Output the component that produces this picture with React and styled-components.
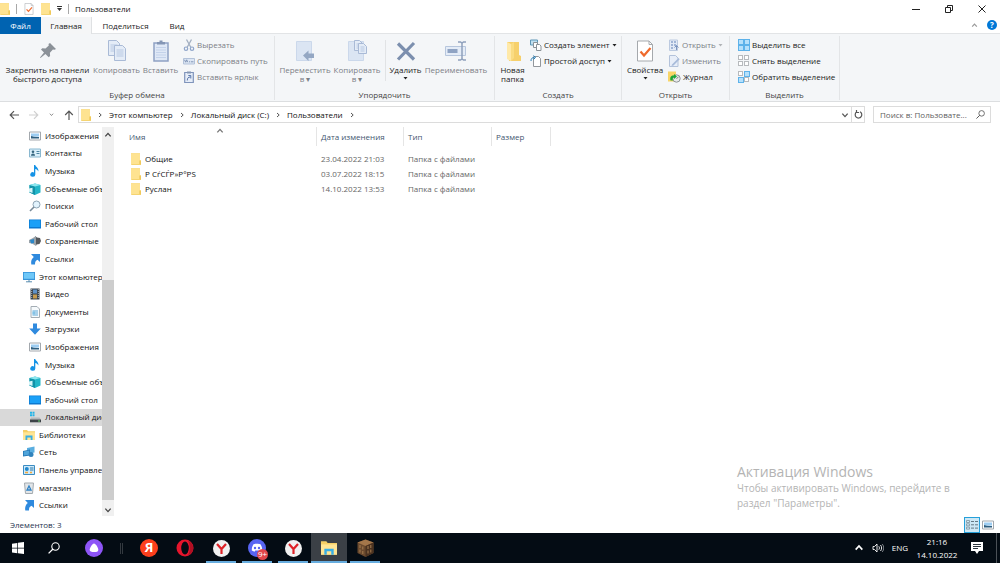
import React from 'react';
import styled, { createGlobalStyle } from 'styled-components';

const GlobalStyle = createGlobalStyle`
  * {
    box-sizing: border-box;
  }

  body {
    margin: 0;
    background: #fff;
    color: #111;
    font-family: 'Open Sans', 'Noto Sans', sans-serif;
    font-size: 8px;
    line-height: 10px;
  }

  button, input {
    font: inherit;
    color: inherit;
    margin: 0;
    padding: 0;
    border: none;
    background: none;
  }

  a {
    color: inherit;
    text-decoration: none;
  }

  svg {
    display: block;
    flex: none;
  }
`;

const Window = styled.div`
  position: relative;
  display: flex;
  flex-direction: column;
  min-height: 100vh;
`;

const TitleBar = styled.header`
  display: flex;
  align-items: center;
  height: 17px;
  gap: 6px;
`;

const QuickButton = styled.button`
  display: flex;
`;

const Divider = styled.span`
  width: 1px;
  height: 10px;
  background: #a8a8a8;
`;

const WindowTitle = styled.h1`
  flex: 1;
  margin: 0;
  font-size: 8px;
  font-weight: 400;
  line-height: 12px;
`;

const WindowButtons = styled.div`
  display: flex;
  padding-right: 2px;
`;

const WindowButton = styled.button`
  display: flex;
  align-items: center;
  justify-content: center;
  width: 33px;
  height: 15px;
`;

const TabBar = styled.nav`
  display: flex;
  height: 17px;
  border-bottom: 1px solid #e2e4e6;
`;

const Tab = styled.button`
  width: ${(props) => props.$width}px;
  height: 17px;
  color: ${(props) => (props.$file ? '#fff' : '#222')};
  background: ${(props) => (props.$file ? '#0063b1' : props.$active ? '#f5f6f7' : 'none')};
  border-right: ${(props) => (props.$active ? '1px solid #dfe1e3' : 'none')};
`;

const TabTools = styled.div`
  display: flex;
  align-items: center;
  gap: 9px;
  margin-left: auto;
  padding-right: 3px;
`;

const HelpButton = styled.button`
  width: 10px;
  height: 10px;
  border-radius: 50%;
  background: #0078d7;
  color: #fff;
  font-weight: 700;
`;

const Ribbon = styled.div`
  display: flex;
  height: 68px;
  padding: 2px 0 1px;
  background: #f4f6f8;
  border-bottom: 1px solid #dcdee0;
`;

const Group = styled.section`
  display: flex;
  flex-direction: column;
  justify-content: space-between;
  width: ${(props) => props.$width}px;
  border-right: 1px solid #e3e5e7;
`;

const GroupTools = styled.div`
  display: flex;
  padding: 1px 0 0 4px;
`;

const GroupLabel = styled.div`
  text-align: center;
  color: #444;
`;

const BigButton = styled.button`
  display: flex;
  flex-direction: column;
  align-items: center;
  gap: 3px;
  width: ${(props) => props.$width}px;
  height: 51px;
  padding-top: 3px;
  white-space: nowrap;
  line-height: 9px;
  color: #222;

  &:disabled {
    color: #7c8086;
  }
`;

const SmallButtons = styled.div`
  display: flex;
  flex-direction: column;
  align-items: flex-start;
  padding-left: 4px;
`;

const SmallButton = styled.button`
  display: flex;
  align-items: center;
  gap: 2px;
  height: 16px;
  color: #222;
  white-space: nowrap;

  &:disabled {
    color: #7c8086;
  }
`;

const ToolDivider = styled.span`
  width: 1px;
  height: 41px;
  margin: 3px 3px 0 2px;
  background: #e1e3e5;
`;

const AddressRow = styled.div`
  display: flex;
  align-items: center;
  height: 25px;
  padding: 0 9px;
  gap: 8px;
`;

const NavButtons = styled.div`
  display: flex;
  align-items: center;
  gap: 10px;
  width: 61px;
`;

const AddressBox = styled.div`
  display: flex;
  align-items: center;
  flex: 1;
  height: 17px;
  border: 1px solid #dcdcdc;
`;

const Crumbs = styled.div`
  display: flex;
  align-items: center;
  flex: 1;
  gap: 6px;
  padding-left: 2px;
`;

const BoxButton = styled.button`
  display: flex;
  align-items: center;
  justify-content: center;
  width: 13px;
  height: 15px;
  border-left: ${(props) => (props.$line ? '1px solid #dcdcdc' : 'none')};
`;

const SearchBox = styled.label`
  display: flex;
  align-items: center;
  width: 118px;
  height: 17px;
  padding: 0 5px 0 6px;
  border: 1px solid #dcdcdc;

  input {
    flex: 1;
    min-width: 0;
    outline: none;
  }

  input::placeholder {
    color: #606060;
    opacity: 1;
  }
`;

const Body = styled.div`
  display: flex;
  flex: 1;
`;

const Sidebar = styled.nav`
  display: flex;
  flex-direction: column;
  width: 102px;
  padding-bottom: 3px;
  overflow: hidden;
`;

const TreeItem = styled.a`
  display: flex;
  align-items: center;
  flex: 1;
  gap: 4px;
  padding-left: ${(props) => (props.$root ? 23 : 29)}px;
  background: ${(props) => (props.$selected ? '#d9d9d9' : 'none')};
  white-space: nowrap;
`;

const ScrollBar = styled.div`
  display: flex;
  flex-direction: column;
  align-items: center;
  justify-content: space-between;
  width: 12px;
  margin-bottom: 1px;
  padding: 4px 0 2px;
  background: #f0f0f0;
`;

const ScrollTrack = styled.div`
  display: flex;
  flex-direction: column;
  justify-content: flex-end;
  flex: 1;
  width: 12px;
  padding-bottom: 6px;
`;

const ScrollThumb = styled.div`
  height: 61%;
  background: #cdcdcd;
`;

const Content = styled.main`
  flex: 1;
  padding-left: 10px;
`;

const FileTable = styled.table`
  table-layout: fixed;
  width: 427px;
  border-collapse: separate;
  border-spacing: 0;

  th {
    position: relative;
    height: 19px;
    padding: 0 0 0 4px;
    border-right: 1px solid #e5e5e5;
    color: #44566f;
    font-weight: 400;
    text-align: left;
  }

  th:first-child {
    padding-left: 5px;
  }

  td {
    height: 15px;
    padding: 0 0 0 4px;
    color: #666;
  }

  tbody::before {
    content: '';
    display: block;
    height: 5px;
  }
`;

const SortMark = styled.span`
  position: absolute;
  top: 0;
  left: 48%;
`;

const FileName = styled.a`
  display: flex;
  align-items: center;
  gap: 4px;
  padding-left: 3px;
  color: #111;
`;

const Watermark = styled.aside`
  position: absolute;
  right: 36px;
  bottom: 52px;
  width: 227px;
  font-size: 10px;
  line-height: 15px;
  color: #b4b4b4;

  h2 {
    margin: 0;
    font-size: 14px;
    font-weight: 400;
    line-height: 18px;
    white-space: nowrap;
  }
`;

const StatusBar = styled.footer`
  display: flex;
  align-items: center;
  justify-content: space-between;
  height: 16px;
  padding: 0 4px 0 10px;
  color: #1f3350;
`;

const ViewButtons = styled.div`
  display: flex;
  align-items: center;
`;

const ViewButton = styled.button`
  display: flex;
  align-items: center;
  justify-content: center;
  width: 16px;
  height: 16px;
  border: 1px solid ${(props) => (props.$active ? '#26a0da' : 'transparent')};
  background: ${(props) => (props.$active ? '#cde8f5' : 'none')};
`;

const Taskbar = styled.footer`
  display: flex;
  height: 30px;
  background: #040c14;
  color: #fff;
`;

const TaskButton = styled.button`
  display: flex;
  align-items: center;
  justify-content: center;
  width: 36px;
  height: 30px;
  background: ${(props) => (props.$active ? '#3b4046' : 'none')};
`;

const PinnedApps = styled.div`
  display: flex;
  padding-left: 4px;
`;

const AppButton = styled(TaskButton)`
  position: relative;

  &::after {
    content: '';
    position: absolute;
    left: ${(props) => (props.$active ? 0 : 3)}px;
    right: ${(props) => (props.$active ? 0 : 3)}px;
    bottom: 0;
    height: 2px;
    background: ${(props) => (props.$running ? '#67addf' : 'none')};
  }
`;

const TaskDivider = styled.span`
  align-self: center;
  width: 3px;
  height: 11px;
  margin: 0 8px;
  border: solid #33393f;
  border-width: 0 1px;
`;

const Tray = styled.div`
  display: flex;
  align-items: center;
  margin-left: auto;
  gap: 8px;
  padding-right: 2px;
`;

const Clock = styled.time`
  width: 42px;
  margin-right: 5px;
  text-align: center;
  line-height: 13px;
`;

const ShowDesktop = styled.button`
  width: 2px;
  height: 30px;
  margin-left: 5px;
  border-left: 1px solid #4b5157;
`;

function Svg({ w = 12, h = w, box = `0 0 ${w} ${h}`, children, ...rest }) {
  return (
    <svg width={w} height={h} viewBox={box} fill="none" aria-hidden="true" {...rest}>
      {children}
    </svg>
  );
}

function Chevron({ dir = 'right', size = 6, color = '#555' }) {
  const paths = {
    right: 'M2 1l2.2 2L2 5',
    down: 'M1 2l2 2.2L5 2',
    up: 'M1 4l2-2.2L5 4',
  };
  return (
    <Svg w={size} box="0 0 6 6">
      <path d={paths[dir]} stroke={color} strokeWidth="1" />
    </Svg>
  );
}

function Caret({ color = '#222' }) {
  return (
    <Svg w={5} h={3}>
      <path d="M.5 0h4L2.5 2.500z" fill={color} />
    </Svg>
  );
}

function Folder({ w = 10, h = 12 }) {
  return (
    <Svg w={w} h={h} box="0 0 10 12">
      <path d="M0 .3h9v7.200h1V12H1L0 11.500z" fill="#f3d06a" />
      <path d="M0 .3h9v10.900H0z" fill="#fee391" />
      <path d="M8.300 7.500H10V11H8.300z" fill="#f0c95a" />
    </Svg>
  );
}

function OpenFolder() {
  return (
    <Svg w={20} h={22}>
      <path d="M4 2h12v13l2 1v5H6z" fill="#f6d06c" />
      <path d="M4 2l4 2v17l-4-2z" fill="#ffe9a8" />
      <path d="M8 4l3-2v16l-3 3z" fill="#fadc83" />
    </Svg>
  );
}

function CheckedPage({ w = 18, h = 22 }) {
  return (
    <Svg w={w} h={h} box="0 0 18 22">
      <path d="M1.5 1h11.5l3.5 3.5V21h-15z" fill="#fff" stroke="#a5a9ad" />
      <path d="M13 1v3.500h3.500" stroke="#a5a9ad" />
      <path d="M4.500 11.500l3.500 4 6.500-7.500" stroke="#ef6a2c" strokeWidth="2.200" />
    </Svg>
  );
}

function Page({ x, y, w = 11, h = 14 }) {
  return (
    <g transform={`translate(${x} ${y})`}>
      <path d={`M.5.5h${w - 4}l3 3v${h - 4}H.5z`} fill="#e4ecf7" stroke="#a9bad6" />
      <path
        d={h > 12 ? `M2.500 5h${w - 5}M2.500 7h${w - 5}M2.500 9h${w - 5}M2.500 11h${w - 5}` : `M2.500 4h${w - 5}M2.500 6h${w - 5}M2.500 8h${w - 5}`}
        stroke="#b7c8e2"
      />
    </g>
  );
}

const PinIcon = () => (
  <Svg w={20} h={22}>
    <path d="M12 3l6 6-1.500.8-1.600-.3-3 3.300.2 3.200-1.400 1.300-3.300-3.400L2.500 18l-.5-.5 4-5-3-3 1.300-1.300 3.200.2 3.300-3-.3-1.400z" fill="#8b9198" />
  </Svg>
);

const CopyIcon = () => (
  <Svg w={20} h={22}>
    <Page x={1} y={0} w={12} h={16} />
    <Page x={7} y={5} w={12} h={16} />
  </Svg>
);

const PasteIcon = ({ w = 18, h = 22 }) => (
  <Svg w={w} h={h} box="0 0 18 22">
    <path d="M2 3h14v18H2z" fill="#dfe8f6" stroke="#8fa1c4" strokeWidth="1.500" />
    <path d="M5 4.500V2h2.500V.6h3V2H13v2.500z" fill="#8496b5" />
    <path d="M4 7.500h10M4 10h10M4 12.500h10M4 15h10M4 17.500h10" stroke="#c3d2ea" />
  </Svg>
);

const MoveToIcon = () => (
  <Svg w={22} h={22}>
    <path d="M2.500 1.500h15v19h-15z" fill="#dbe5f3" stroke="#cbd8eb" />
    <path d="M9 15.500l5.500-5v3H20v4.500h-5.500v3z" fill="#94a7c3" />
  </Svg>
);

const CopyToIcon = () => (
  <Svg w={22} h={22}>
    <path d="M2.500 1.500h15v19h-15z" fill="#dbe5f3" stroke="#cbd8eb" />
    <Page x={8} y={0} w={9} h={11} />
    <Page x={12} y={3} w={9} h={11} />
  </Svg>
);

const DeleteIcon = () => (
  <Svg w={20} h={22}>
    <path d="M2 3.500l16 16M18 3L2 19.500" stroke="#7c8fae" strokeWidth="3.200" />
  </Svg>
);

const RenameIcon = () => (
  <Svg w={22} h={22}>
    <path d="M.5 6.500h20v9H.5z" fill="#e4ecf7" stroke="#b7c6dd" />
    <path d="M2.500 9h10v4h-10z" fill="#8fa3c3" />
    <path d="M13 2h2.500l1.500 1 1.500-1H21M17 2.500v17M13 20h2.500l1.500-1 1.500 1H21" stroke="#8ea0bc" strokeWidth="1.500" />
  </Svg>
);

const CutIcon = () => (
  <Svg w={12}>
    <path d="M3.500.5l4.300 7.800M8.500.5L4.200 8.300" stroke="#a3afc1" strokeWidth="1.300" />
    <circle cx="3" cy="9.700" r="1.700" stroke="#8fa5ca" strokeWidth="1.200" />
    <circle cx="9" cy="9.700" r="1.700" stroke="#8fa5ca" strokeWidth="1.200" />
  </Svg>
);

const CopyPathIcon = () => (
  <Svg w={12}>
    <path d="M.5 3.500h11v5.500H.5z" fill="#dce6f4" stroke="#b3c2d9" />
    <path d="M1.500 4.800l1.200 2.400 1-2.400 1 2.400M6 6.800h1.200M8 6.800h2.500" stroke="#8296b6" />
  </Svg>
);

const PasteLinkIcon = () => (
  <Svg w={12}>
    <path d="M1.700 1.500h8.600v10H1.700z" fill="#e6edf8" stroke="#7f94bb" strokeWidth="1.200" />
    <path d="M4 .5h4v2H4z" fill="#8496b5" />
    <path d="M4.300 9.500c0-2.500 1-3.500 3-3.500M5.300 4.500h2.500V7.500" stroke="#5b78ad" />
  </Svg>
);

const NewItemIcon = () => (
  <Svg w={12}>
    <path d="M.5 1h7v5h-7z" fill="#bfdff0" stroke="#5f97b6" />
    <path d="M3.500 3.500h4v5h-4z" fill="#fff" stroke="#8b9297" />
    <path d="M6.500 5.500h3l1.500 1.500v4.500H6.500z" fill="#fff" stroke="#8b9297" />
  </Svg>
);

const EasyAccessIcon = () => (
  <Svg w={12}>
    <path d="M3.500 1.500h5l2 2v8h-7z" fill="#fff" stroke="#92979c" />
    <path d="M1 6c0-2.500 1-3.500 3.500-3.500M3.500.5l2 2-2 2" stroke="#2881b9" />
  </Svg>
);

const OpenIcon = () => (
  <Svg w={12}>
    <path d="M1.500 1h8v10.500h-8z" fill="#e2eaf6" stroke="#bccae0" />
    <path d="M3 3h2M3 6h2M3 9h2M6 3h2M6 6h2" stroke="#8ca4cb" strokeWidth="1.500" />
    <path d="M8.500 11V6.500M6.500 8.500l2-2 2 2" stroke="#7c94bd" />
  </Svg>
);

const EditIcon = () => (
  <Svg w={12}>
    <path d="M1.500.5h6l2.500 2.500v8.500H1.500z" fill="#e8eef8" stroke="#b3c2da" />
    <path d="M4 9.500l6.500-6.500 1.200 1.200L5.500 10.500l-2 .6z" fill="#a8bbd9" />
  </Svg>
);

const HistoryIcon = () => (
  <Svg w={13} h={12}>
    <path d="M0 .5h8v10H0z" fill="#f8d567" />
    <circle cx="8.500" cy="7.500" r="3.700" fill="#e7e9ea" stroke="#8f9599" />
    <path d="M8.500 7.500l2-1.500" stroke="#777" />
    <path d="M2.500 9.500c-1-3.500 1-5.500 3.500-5V3l3 2.500-3 2.500V6.500c-1.500 0-1.500 1.500-1 3z" fill="#1da63a" />
  </Svg>
);

const CELLS = [[0.5, 0.5], [6.5, 0.5], [0.5, 6.5], [6.5, 6.5]];

function SelectIcon({ filled }) {
  return (
    <Svg w={12}>
      {CELLS.map(([x, y], i) => (
        <rect
          key={i}
          x={x}
          y={y}
          width={filled[i] ? 5 : 4}
          height={filled[i] ? 5 : 4}
          fill={filled[i] ? '#b5e0fb' : '#fff'}
          stroke={filled[i] ? '#5db2ea' : '#b7babd'}
        />
      ))}
    </Svg>
  );
}

const ArrowIcon = ({ d, color = '#555' }) => (
  <Svg w={10}>
    <path d={d} stroke={color} strokeWidth="1.200" />
  </Svg>
);

const SearchIcon = ({ w = 9, color = '#555' }) => (
  <Svg w={w} box="0 0 12 12">
    <circle cx="7.500" cy="4.500" r="3.700" stroke={color} strokeWidth="1.100" />
    <path d="M5 7L.6 11.400" stroke={color} strokeWidth="1.300" />
  </Svg>
);

const PictureIcon = () => (
  <Svg w={12}>
    <path d="M.5 2h11v8H.5z" fill="#fff" stroke="#a3a8ad" />
    <path d="M2 3.500h8v3H2z" fill="#9dcdf2" />
    <path d="M2 6l3 .8 5 .2v1.500H2z" fill="#2f5f80" />
  </Svg>
);

const ContactIcon = () => (
  <Svg w={12}>
    <path d="M.5 2h11v8H.5z" fill="#d9effa" stroke="#8ab8d0" />
    <circle cx="4" cy="4.800" r="1.300" fill="#35657f" />
    <path d="M2 8.800c0-3 4-3 4 0z" fill="#35657f" />
    <path d="M7.500 4.500h3M7.500 6.500h3" stroke="#4c86a5" />
  </Svg>
);

const MusicIcon = () => (
  <Svg w={12}>
    <path d="M5 0h1.300c.3 2 3.700 2.800 3 6.500-.6-1.600-1.800-2.300-3-2.500V9.500a2.500 2.300 0 1 1-1.300-2z" fill="#1593e6" />
  </Svg>
);

const CubeIcon = () => (
  <Svg w={12}>
    <path d="M.5 2L6 .5l5.500 1.500v7.500L6 12 .5 9.500z" fill="#23b6c8" />
    <path d="M.5 2L6 3.500V12L.5 9.500z" fill="#1292a8" />
    <path d="M.5 2L6 .5l5.500 1.500L6 3.500z" fill="#8de6ee" />
    <path d="M0 5.500l3.500-.8V10L0 8.800z" fill="#d5f5f9" />
  </Svg>
);

const LensIcon = () => (
  <Svg w={12}>
    <circle cx="7.500" cy="4.500" r="3.500" fill="#e2f3fd" stroke="#8fa5b5" />
    <path d="M5 7L1 11" stroke="#788a98" strokeWidth="1.600" />
  </Svg>
);

const DesktopIcon = () => (
  <Svg w={12}>
    <path d="M0 1.500h12v9H0z" fill="#0b79d0" />
    <path d="M.7 2.200h10.600v6.800H.7z" fill="#1ba0f7" />
  </Svg>
);

const SavedIcon = () => (
  <Svg w={12}>
    <path d="M6 1l2 1.500 3 .5 1 3-1.500 3-3 .5L7 11z" fill="#55595d" />
    <path d="M3 3.500L7 1v10L3 8.500 0 8V5z" fill="#9aa3aa" />
    <path d="M1 5l4-1v4l-3 .5z" fill="#2b87c8" />
  </Svg>
);

const LinkIcon = () => (
  <Svg w={12}>
    <path d="M2 1h9v8L8.600 6.700C6.500 7.500 6 9 6 11.500H2.300c-.6-3.500.4-5.800 2.500-7.500z" fill="#2f8ade" />
  </Svg>
);

const ComputerIcon = () => (
  <Svg w={12}>
    <path d="M0 1h12v8H0z" fill="#3693d8" />
    <path d="M.8 1.800h10.400v6H.8z" fill="#6fc8f8" />
    <path d="M3 10.800h6M6 9v2" stroke="#5b8db0" />
  </Svg>
);

const VideoIcon = () => (
  <Svg w={12}>
    <path d="M1.500.5h9v11h-9z" fill="#39434c" />
    <path d="M4 1.500h4v4H4z" fill="#5f93c9" />
    <path d="M4 6.500h4v4H4z" fill="#c69b4d" />
    <path d="M2.700 1v10M9.300 1v10" stroke="#cfd5da" strokeDasharray="1 1" strokeWidth=".8" />
  </Svg>
);

const DocumentIcon = () => (
  <Svg w={12}>
    <path d="M2 .5h6l2.500 2.500v8.500H2z" fill="#f6fafc" stroke="#a4adb4" />
    <path d="M3.500 5h5.500M3.500 7h5.500M3.500 9h5.500" stroke="#5aa7d8" />
    <path d="M3.500 5.500h2.500v3H3.500z" fill="#83c2e6" />
  </Svg>
);

const DownloadIcon = () => (
  <Svg w={12}>
    <path d="M4 .5h4v5h3.800L6 11.800.2 5.500H4z" fill="#2f8ade" />
  </Svg>
);

const DiskIcon = () => (
  <Svg w={12}>
    <path d="M1 .8h2v2H1zM3.500.8h2v2h-2zM1 3.300h2v2H1zM3.500 3.300h2v2h-2z" fill="#20b4e8" />
    <path d="M2 6.500h8.500L12 8.500H1z" fill="#b4b8bb" />
    <path d="M1 8.500h11v2.800H1z" fill="#3d4347" />
    <path d="M9 10h2" stroke="#65d46c" />
  </Svg>
);

const LibraryIcon = ({ w = 12 }) => (
  <Svg w={w} box="0 0 12 12">
    <path d="M0 1h4l1 1.300h7V11H0z" fill="#f5cf66" />
    <path d="M0 3.300h12V11H0z" fill="#ffe594" />
    <path d="M2.500 11V6.500h7V11H7.700V8.500H4.300V11z" fill="#37aee6" />
  </Svg>
);

const NetworkIcon = () => (
  <Svg w={12}>
    <path d="M4 2l7.500-1.500v6L4 8z" fill="#5aaee0" />
    <path d="M0 5l7-1.500v6L0 10.500z" fill="#2577b4" />
    <path d="M.8 5.600l5.500-1.100v4.300L.8 9.600z" fill="#4fa4da" />
    <circle cx="8" cy="8.500" r="2.500" fill="#3183bd" />
  </Svg>
);

const ControlIcon = () => (
  <Svg w={12}>
    <path d="M.5 1.500h11v9H.5z" fill="#cfeafa" stroke="#3b8cc2" />
    <circle cx="3.800" cy="5" r="2" fill="#2188cd" />
    <path d="M7 4h3.500M7 6h3.500" stroke="#2a78ab" />
    <path d="M2 8.500h3M7 8.500h2" stroke="#f2a93b" strokeWidth="1.300" />
  </Svg>
);

const BinIcon = () => (
  <Svg w={12}>
    <path d="M1.500 1h9l-1 10.500h-7z" fill="#e2e6e9" stroke="#a3aaaf" />
    <path d="M6 4L8 8H4z" stroke="#2f82c4" strokeWidth="1.300" />
  </Svg>
);

const StartIcon = () => (
  <Svg w={12}>
    <path d="M0 1.700l5.300-.8v4.800H0zM6 .8L12 0v5.700H6zM0 6.400h5.300v4.800L0 10.400zM6 6.400h6V12l-6-.8z" fill="#fff" />
  </Svg>
);

const AliceIcon = () => (
  <Svg w={18}>
    <circle cx="9" cy="9" r="9" fill="#8e55f7" />
    <path d="M9 4.500c1.700 0 4.300 4.200 4.300 6.300S11.500 13 9 13s-4.300-.3-4.300-2.200S7.300 4.500 9 4.500z" fill="#fff" />
  </Svg>
);

const YandexBadge = styled.span`
  width: 18px;
  height: 18px;
  border-radius: 50%;
  background: #fc3f1d;
  color: #fff;
  font-size: 13px;
  font-weight: 700;
  line-height: 17px;
`;

const OperaIcon = () => (
  <Svg w={18}>
    <ellipse cx="9" cy="9" rx="8.500" ry="8.500" fill="#e5152c" />
    <path d="M12 1.500c7 3 7 12 0 15 2.500-4 2.500-11 0-15z" fill="#b00f22" />
    <ellipse cx="9" cy="9" rx="3.800" ry="6.500" fill="#040c14" />
  </Svg>
);

const BrowserIcon = () => (
  <Svg w={17}>
    <circle cx="8.500" cy="8.500" r="8.500" fill="#f1f1f1" />
    <path d="M4 4l4.500 5L13 4M8.500 8.500V14" stroke="#df2227" strokeWidth="2.200" />
  </Svg>
);

const DiscordIcon = () => (
  <Svg w={18}>
    <circle cx="9" cy="9" r="9" fill="#5865f2" />
    <path d="M5.500 5.200C7 4.500 11 4.500 12.500 5.200c1.300 2 1.800 4 1.700 6.300l-2.700 1.300-.8-1.300H7.300l-.8 1.300-2.700-1.300c-.1-2.300.4-4.300 1.700-6.300z" fill="#fff" />
    <circle cx="7" cy="9" r="1.200" fill="#5865f2" />
    <circle cx="11" cy="9" r="1.200" fill="#5865f2" />
  </Svg>
);

const Badge = styled.span`
  position: absolute;
  right: 7px;
  bottom: 3px;
  width: 11px;
  height: 11px;
  border-radius: 50%;
  background: #e0464b;
  line-height: 10px;
`;

const BlockIcon = () => (
  <Svg w={17} h={18}>
    <path d="M8.500.5l8 3v10.500l-8 4-8-4V3.500z" fill="#6b4a2e" />
    <path d="M8.500.5l8 3-8 3.500-8-3.500z" fill="#a3764a" />
    <path d="M8.500 7v11l8-4V3.500z" fill="#4b3220" />
    <path d="M3 6v8M5.800 7.500v8M11 7v8.500M13.800 6v8" stroke="#a57c50" strokeDasharray="3 1.500" />
  </Svg>
);

const SpeakerIcon = () => (
  <Svg w={12}>
    <path d="M1 4.500h1.500L5 2v8L2.500 7.500H1z" stroke="#fff" strokeWidth=".9" />
    <path d="M6.800 4.300c.8 1 .8 2.400 0 3.400M8.500 3c1.500 1.800 1.500 4.200 0 6" stroke="#fff" strokeWidth=".9" />
    <path d="M10.200 2c2 2.400 2 5.600 0 8" stroke="#8b9095" strokeWidth=".9" />
  </Svg>
);

const NoticeIcon = () => (
  <Svg w={12}>
    <path d="M0 0h12v9H8l-2 3-2-3H0z" fill="#fff" />
    <path d="M2 2.500h8M2 4.500h8M2 6.500h5" stroke="#15202a" strokeWidth=".9" />
  </Svg>
);

const DetailsIcon = () => (
  <Svg w={12} h={10}>
    <path d="M.5.5h3v2h-3zM.5 3.800h3v2h-3zM.5 7.100h3v2h-3z" stroke="#7f929c" strokeWidth=".8" />
    <path d="M5 1.500h7M5 4.800h7M5 8.100h7" stroke="#647985" strokeDasharray="3 1" />
  </Svg>
);

const TREE = [
  ['Изображения', PictureIcon],
  ['Контакты', ContactIcon],
  ['Музыка', MusicIcon],
  ['Объемные объекты', CubeIcon],
  ['Поиски', LensIcon],
  ['Рабочий стол', DesktopIcon],
  ['Сохраненные', SavedIcon],
  ['Ссылки', LinkIcon],
  ['Этот компьютер', ComputerIcon, 'root'],
  ['Видео', VideoIcon],
  ['Документы', DocumentIcon],
  ['Загрузки', DownloadIcon],
  ['Изображения', PictureIcon],
  ['Музыка', MusicIcon],
  ['Объемные объекты', CubeIcon],
  ['Рабочий стол', DesktopIcon],
  ['Локальный диск (C:)', DiskIcon, 'selected'],
  ['Библиотеки', LibraryIcon, 'root'],
  ['Сеть', NetworkIcon, 'root'],
  ['Панель управления', ControlIcon, 'root'],
  ['магазин', BinIcon, 'root'],
  ['Ссылки', LinkIcon, 'root'],
];

const FILES = [
  { name: 'Общие', date: '23.04.2022 21:03' },
  { name: 'Р СѓС\u0403Р»Р°Р\u0405', date: '03.07.2022 18:15' },
  { name: 'Руслан', date: '14.10.2022 13:53' },
];

function RibbonPanel() {
  return (
    <Ribbon>
      <Group $width={275}>
        <GroupTools>
          <BigButton $width={87}>
            <PinIcon />
            <span>Закрепить на панели<br />быстрого доступа</span>
          </BigButton>
          <BigButton $width={51} disabled><CopyIcon />Копировать</BigButton>
          <BigButton $width={37} disabled><PasteIcon />Вставить</BigButton>
          <SmallButtons>
            <SmallButton disabled><CutIcon />Вырезать</SmallButton>
            <SmallButton disabled><CopyPathIcon />Скопировать путь</SmallButton>
            <SmallButton disabled><PasteLinkIcon />Вставить ярлык</SmallButton>
          </SmallButtons>
        </GroupTools>
        <GroupLabel>Буфер обмена</GroupLabel>
      </Group>
      <Group $width={220}>
        <GroupTools>
          <BigButton $width={52} disabled><MoveToIcon /><span>Переместить<br />в ▾</span></BigButton>
          <BigButton $width={52} disabled><CopyToIcon /><span>Копировать<br />в ▾</span></BigButton>
          <ToolDivider />
          <BigButton $width={33}><DeleteIcon />Удалить<Caret /></BigButton>
          <BigButton $width={68} disabled><RenameIcon />Переименовать</BigButton>
        </GroupTools>
        <GroupLabel>Упорядочить</GroupLabel>
      </Group>
      <Group $width={127}>
        <GroupTools>
          <BigButton $width={27}><OpenFolder /><span>Новая<br />папка</span></BigButton>
          <SmallButtons>
            <SmallButton><NewItemIcon />Создать элемент <Caret /></SmallButton>
            <SmallButton><EasyAccessIcon />Простой доступ <Caret /></SmallButton>
          </SmallButtons>
        </GroupTools>
        <GroupLabel>Создать</GroupLabel>
      </Group>
      <Group $width={108}>
        <GroupTools>
          <BigButton $width={38}><CheckedPage />Свойства<Caret /></BigButton>
          <SmallButtons>
            <SmallButton disabled><OpenIcon />Открыть <Caret color="#b0b3b6" /></SmallButton>
            <SmallButton disabled><EditIcon />Изменить</SmallButton>
            <SmallButton><HistoryIcon />Журнал</SmallButton>
          </SmallButtons>
        </GroupTools>
        <GroupLabel>Открыть</GroupLabel>
      </Group>
      <Group $width={110}>
        <GroupTools>
          <SmallButtons>
            <SmallButton><SelectIcon filled={[1, 1, 1, 1]} />Выделить все</SmallButton>
            <SmallButton><SelectIcon filled={[0, 0, 0, 0]} />Снять выделение</SmallButton>
            <SmallButton><SelectIcon filled={[0, 1, 1, 0]} />Обратить выделение</SmallButton>
          </SmallButtons>
        </GroupTools>
        <GroupLabel>Выделить</GroupLabel>
      </Group>
    </Ribbon>
  );
}

function App() {
  return (
    <>
      <GlobalStyle />
      <Window>
        <TitleBar>
          <Folder />
          <Divider />
          <QuickButton aria-label="Свойства"><CheckedPage w={12} h={12} /></QuickButton>
          <QuickButton aria-label="Новая папка"><Folder /></QuickButton>
          <QuickButton aria-label="Настроить"><Svg w={5} h={5}><path d="M0 .5h5" stroke="#333" /><path d="M0 2h5L2.500 5z" fill="#333" /></Svg></QuickButton>
          <Divider />
          <WindowTitle>Пользователи</WindowTitle>
          <WindowButtons>
            <WindowButton aria-label="Свернуть"><Svg w={8}><path d="M0 4.500h8" stroke="#222" /></Svg></WindowButton>
            <WindowButton aria-label="Развернуть"><Svg w={8}><path d="M.5 2.500h5v5h-5zM2.500 2V.5h5v5H6" stroke="#222" /></Svg></WindowButton>
            <WindowButton aria-label="Закрыть"><Svg w={8}><path d="M.5.5l7 7M7.500.5l-7 7" stroke="#222" /></Svg></WindowButton>
          </WindowButtons>
        </TitleBar>
        <TabBar>
          <Tab $width={41} $file>Файл</Tab>
          <Tab $width={51} $active>Главная</Tab>
          <Tab $width={67}>Поделиться</Tab>
          <Tab $width={36}>Вид</Tab>
          <TabTools>
            <Chevron dir="up" size={7} color="#999" />
            <HelpButton aria-label="Справка">?</HelpButton>
          </TabTools>
        </TabBar>
        <RibbonPanel />
        <AddressRow>
          <NavButtons>
            <ArrowIcon d="M10 5H1.500M5 1.200L1.200 5 5 8.800" />
            <ArrowIcon d="M0 5h8.500M5 1.200L8.800 5 5 8.800" color="#d0d0d0" />
            <Chevron dir="down" size={5} color="#777" />
            <ArrowIcon d="M5 10V1.500M1.200 5L5 1.200 8.800 5" />
          </NavButtons>
          <AddressBox>
            <Crumbs>
              <Folder />
              <Chevron />
              <a href="#computer">Этот компьютер</a>
              <Chevron />
              <a href="#disk">Локальный диск (C:)</a>
              <Chevron />
              <a href="#users">Пользователи</a>
              <Chevron />
            </Crumbs>
            <BoxButton aria-label="Предыдущие расположения"><Chevron dir="down" size={8} /></BoxButton>
            <BoxButton $line aria-label="Обновить">
              <Svg w={9}><path d="M6 1.800a3.300 3.300 0 1 1-3.500.3M2.500 0v2.500H5" stroke="#555" strokeWidth="1.200" /></Svg>
            </BoxButton>
          </AddressBox>
          <SearchBox>
            <input type="text" placeholder="Поиск в: Пользовате..." aria-label="Поиск" />
            <SearchIcon />
          </SearchBox>
        </AddressRow>
        <Body>
          <Sidebar>
            {TREE.map(([label, Icon, kind], i) => (
              <TreeItem key={i} href={`#item-${i}`} $root={kind === 'root'} $selected={kind === 'selected'}>
                <Icon />
                {label}
              </TreeItem>
            ))}
          </Sidebar>
          <ScrollBar>
            <Chevron dir="up" size={8} color="#444" />
            <ScrollTrack><ScrollThumb /></ScrollTrack>
            <Chevron dir="down" size={8} color="#444" />
          </ScrollBar>
          <Content>
            <FileTable>
              <colgroup>
                <col width="193" />
                <col width="87" />
                <col width="88" />
                <col width="59" />
              </colgroup>
              <thead>
                <tr>
                  <th>Имя<SortMark><Chevron dir="up" size={8} color="#777" /></SortMark></th>
                  <th>Дата изменения</th>
                  <th>Тип</th>
                  <th>Размер</th>
                </tr>
              </thead>
              <tbody>
                {FILES.map((file) => (
                  <tr key={file.name}>
                    <td><FileName href="#file"><Folder />{file.name}</FileName></td>
                    <td>{file.date}</td>
                    <td>Папка с файлами</td>
                    <td />
                  </tr>
                ))}
              </tbody>
            </FileTable>
          </Content>
        </Body>
        <StatusBar>
          Элементов: 3
          <ViewButtons>
            <ViewButton $active aria-label="Таблица"><DetailsIcon /></ViewButton>
            <ViewButton aria-label="Крупные значки"><PictureIcon /></ViewButton>
          </ViewButtons>
        </StatusBar>
        <Watermark>
          <h2>Активация Windows</h2>
          Чтобы активировать Windows, перейдите в раздел "Параметры".
        </Watermark>
        <Taskbar>
          <TaskButton aria-label="Пуск"><StartIcon /></TaskButton>
          <TaskButton aria-label="Поиск"><SearchIcon w={12} color="#fff" /></TaskButton>
          <PinnedApps>
            <TaskButton aria-label="Алиса"><AliceIcon /></TaskButton>
            <TaskDivider />
            <AppButton aria-label="Яндекс"><YandexBadge>Я</YandexBadge></AppButton>
            <AppButton aria-label="Opera"><OperaIcon /></AppButton>
            <AppButton $running aria-label="Браузер"><BrowserIcon /></AppButton>
            <AppButton $running aria-label="Discord"><DiscordIcon /><Badge>9+</Badge></AppButton>
            <AppButton $running aria-label="Браузер"><BrowserIcon /></AppButton>
            <AppButton $running $active aria-label="Проводник"><LibraryIcon w={16} /></AppButton>
            <AppButton $running aria-label="Minecraft"><BlockIcon /></AppButton>
          </PinnedApps>
          <Tray>
            <Chevron dir="up" size={10} color="#fff" />
            <SpeakerIcon />
            <span>ENG</span>
            <Clock>21:16<br />14.10.2022</Clock>
            <NoticeIcon />
            <ShowDesktop aria-label="Свернуть все окна" />
          </Tray>
        </Taskbar>
      </Window>
    </>
  );
}

export default App;
